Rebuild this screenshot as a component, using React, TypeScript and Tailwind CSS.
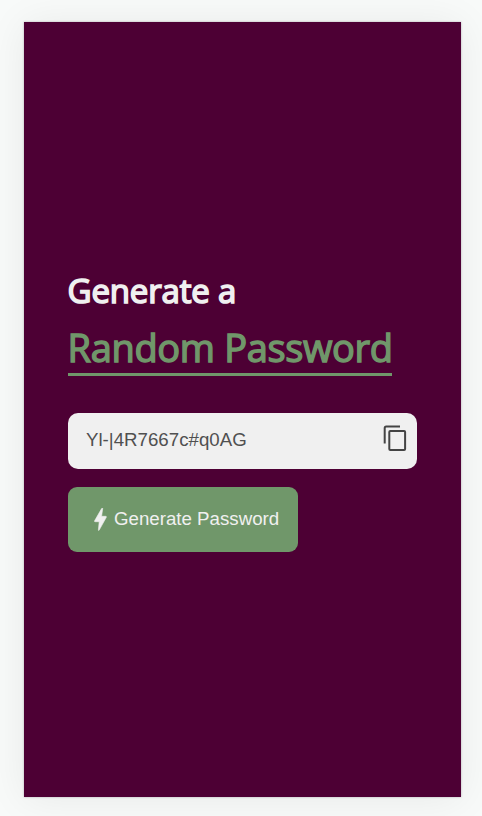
export default function App() {
  return (
    <div className="h-[816px] w-[482px] overflow-hidden bg-[#f8faf9] pl-[24px] pt-[22px]">
      <main className="h-[775px] w-[437px] bg-[#4d0034] pl-[43.6px] pt-[246.6px] shadow-[0_0_2px_rgba(40,20,40,0.3),0_2px_38px_rgba(0,0,0,0.07)]">
        <h1 className="font-['Open_Sans',sans-serif] font-normal">
          <span className="block h-[52px] whitespace-nowrap text-[33px] leading-[44px] tracking-[-0.17px] text-[#f0f0f0] [-webkit-text-stroke:1.6px_#f0f0f0]">
            Generate a
          </span>
          <span className="block h-[55px] w-[324.6px] whitespace-nowrap border-b-[3px] border-[#70976a] text-[38px] leading-[53px] tracking-[-0.35px] text-[#70976a] [-webkit-text-stroke:1.4px_#70976a]">
            Random Password
          </span>
        </h1>
        <div className="mt-[37px] flex h-[56px] w-[349px] items-center justify-between rounded-[10px] bg-[#f0f0f0] pl-[18.4px] pr-[10px] font-['Liberation_Sans',Arial,sans-serif]">
          <span className="mb-[2px] text-[18.7px] leading-[24px] text-[#505050]">Yl-|4R7667c#q0AG</span>
          <button aria-label="Copy password" className="mb-[5px]">
            <svg width="24" height="27" viewBox="0 0 24 27" fill="none" stroke="#444444" strokeWidth="2">
              <path d="M1.7 18.5V3Q1.7 1.5 3.2 1.5H17" />
              <rect x="6.3" y="6" width="15.8" height="19" rx="1" />
            </svg>
          </button>
        </div>
        <button className="mt-[18.4px] flex h-[65px] w-[230px] items-center rounded-[9px] bg-[#70976a] pl-[26.4px] font-['Liberation_Sans',Arial,sans-serif] text-[18.7px] text-[#f0f0f0]">
          <svg className="mr-[7px] shrink-0" width="13" height="23" viewBox="0 0 13 23" fill="#f0f0f0" stroke="#f0f0f0" strokeWidth=".6">
            <path d="M8.7.5 7.6 8.3h4.1c.7 0 .9.5.6 1L5.2 22.1c-.3.6-.9.4-.8-.2l.8-8.2H1.1c-.6 0-.8-.4-.5-.9L7.6.6c.4-.7 1.2-.7 1.1-.1Z" />
          </svg>
          <span className="mb-[1px] whitespace-nowrap">Generate Password</span>
        </button>
      </main>
    </div>
  );
}
